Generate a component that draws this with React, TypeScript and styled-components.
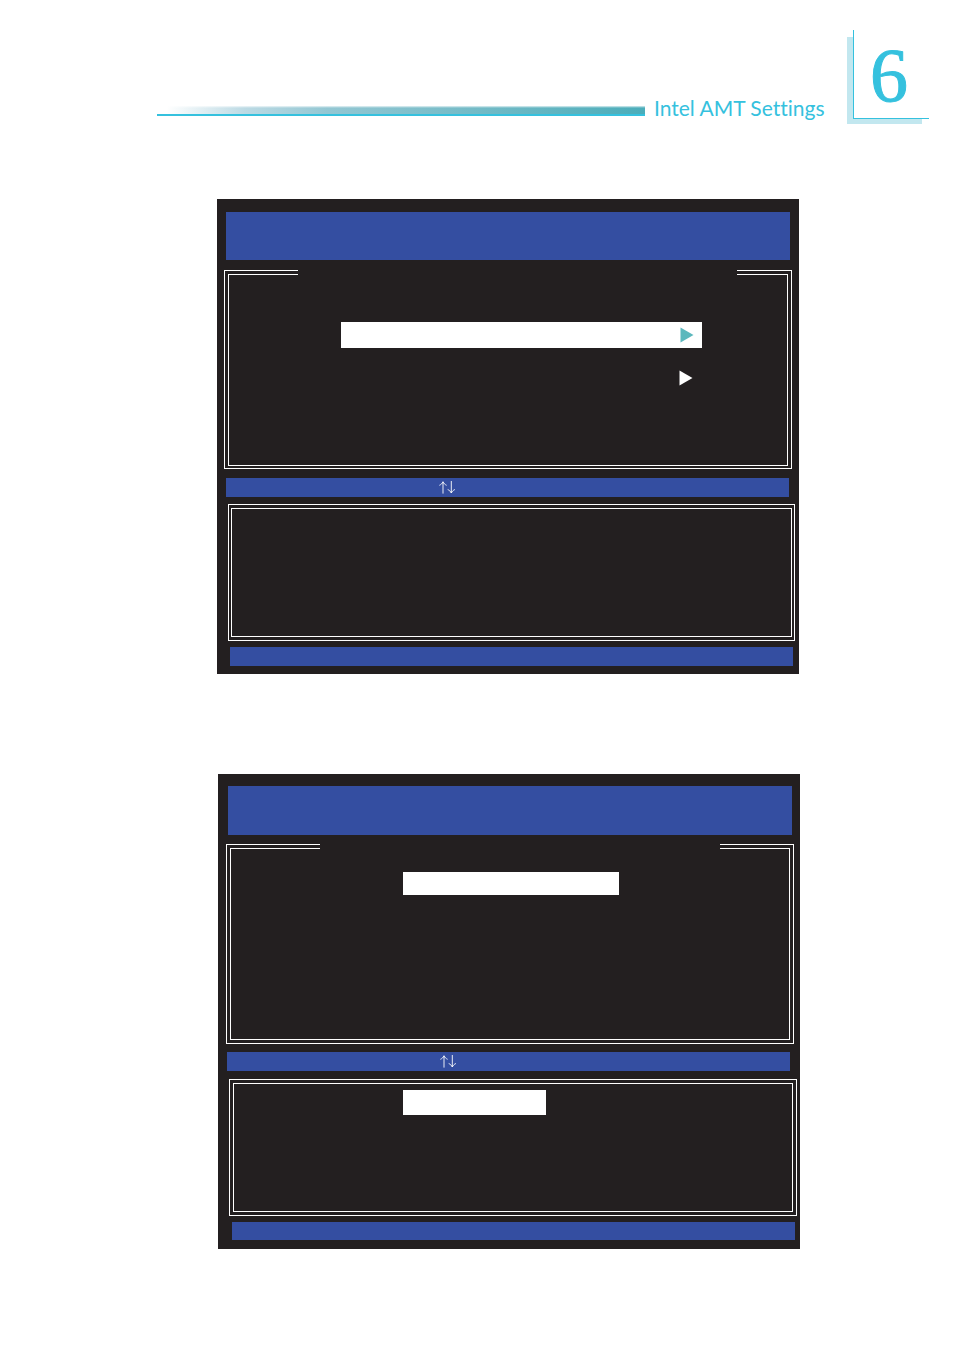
import React from "react";
import styled, { createGlobalStyle } from "styled-components";

const GlobalStyle = createGlobalStyle`
  *, *::before, *::after { box-sizing: border-box; }
  body {
    margin: 0;
    background: #ffffff;
    font-family: "Liberation Sans", Arial, sans-serif;
  }
`;

const colors = {
  accent: "#35c1de",
  pale: "#c2e7ef",
  screen: "#231f20",
  bar: "#344ea1",
  teal: "#5cb8bd",
};

const Page = styled.div`
  padding: 30px 25px 101px;
`;

const Header = styled.header`
  display: flex;
  align-items: flex-start;
  padding-left: 132px;
`;

const Rule = styled.div`
  flex: 1;
  height: 10px;
  margin-top: 76px;
  border-bottom: 2px solid ${colors.accent};
  background:
    linear-gradient(to bottom, rgba(255, 255, 255, 0.6) 0 1px, rgba(255, 255, 255, 0.2) 1px 2px, transparent 2px),
    linear-gradient(to right, #ffffff 2%, #bcdae4 18%, #93c7d3 35%, #77bcc8 62%, #4badba 100%);
`;

const Title = styled.h1`
  margin: 64px 31px 0 9px;
  width: 168px;
  white-space: nowrap;
  font: 400 21px/28px Lato, "Open Sans", sans-serif;
  font-variant-ligatures: none;
  color: ${colors.accent};
`;

const Chapter = styled.div`
  position: relative;
  z-index: 0;
  width: 76px;
  height: 89px;
  padding-right: 5px;
  border-left: 1px solid ${colors.accent};
  border-bottom: 1px solid ${colors.accent};
  background: #ffffff;
  color: ${colors.accent};
  font: 400 76px/90px "Liberation Serif", "Times New Roman", serif;
  -webkit-text-stroke: 1px ${colors.accent};
  text-align: center;

  &::before,
  &::after {
    content: "";
    position: absolute;
    background: ${colors.pale};
  }
  &::before {
    top: 7px;
    bottom: -6px;
    left: -7px;
    width: 6px;
  }
  &::after {
    left: -7px;
    right: 7px;
    bottom: -6px;
    height: 5px;
  }
`;

const Screens = styled.main`
  display: flex;
  flex-direction: column;
  gap: 100px;
  padding: 77px 129px 0 192px;
`;

const Screen = styled.section<{ $shift?: boolean }>`
  display: flex;
  flex-direction: column;
  margin-left: ${(p) => (p.$shift ? 1 : 0)}px;
  margin-right: ${(p) => (p.$shift ? 0 : 1)}px;
  padding: ${(p) => (p.$shift ? "12px 0 9px" : "13px 0 8px")};
  background: ${colors.screen};
`;

const Bar = styled.div<{ $height: number; $inset: string }>`
  height: ${(p) => p.$height}px;
  margin: ${(p) => p.$inset};
  background: ${colors.bar};
`;

const KeyBar = styled(Bar)`
  display: flex;
  align-items: center;
  padding-left: 213px;
  color: #ffffff;
`;

const Frame = styled.div<{ $height: number; $inset: string; $space?: string }>`
  position: relative;
  display: flex;
  min-height: ${(p) => p.$height}px;
  margin: ${(p) => p.$inset};
  padding: ${(p) => p.$space ?? "3px"};
  border: 1px solid #ffffff;
`;

const FrameInner = styled.div<{ $padding?: string }>`
  flex: 1;
  display: flex;
  flex-direction: column;
  align-items: stretch;
  gap: 17px;
  padding: ${(p) => p.$padding ?? "0"};
  border: 1px solid #ffffff;
`;

const HeadingGap = styled.div<{ $left: number; $right: number }>`
  position: absolute;
  top: -1px;
  left: ${(p) => p.$left}px;
  right: ${(p) => p.$right}px;
  height: 5px;
  background: ${colors.screen};
`;

const MenuItem = styled.button<{ $selected?: boolean; $height?: number }>`
  display: flex;
  align-items: center;
  justify-content: flex-end;
  height: ${(p) => p.$height ?? 26}px;
  padding: 0 ${(p) => (p.$selected ? 8 : 9)}px 0 0;
  border: 0;
  background: ${(p) => (p.$selected ? "#ffffff" : "transparent")};
  color: ${(p) => (p.$selected ? colors.teal : "#ffffff")};
`;

const Entry = styled.input`
  width: 143px;
  height: 25px;
  padding: 0 8px;
  border: 0;
  border-radius: 0;
  background: #ffffff;
  font: 16px "Liberation Sans", sans-serif;
`;

const Triangle = () => (
  <svg width="14" height="16" viewBox="0 0 14 16" aria-hidden="true">
    <path d="M0.5 0.5L13.5 8L0.5 15.5Z" fill="currentColor" />
  </svg>
);

const UpDownArrows = () => (
  <svg width="17" height="13" viewBox="0 0 17 13" role="img" aria-label="Up and down arrow keys">
    <g fill="none" stroke="currentColor" strokeWidth="0.9">
      <path d="M4 0.8V12.6M0.4 4.3C2 3.6 3.3 2.4 4 0.8C4.700 2.400 6 3.600 7.600 4.300" />
      <path d="M12.300 0V12M8.700 8.500C10.300 9.200 11.600 10.400 12.300 12C13 10.400 14.300 9.200 15.900 8.500" />
    </g>
  </svg>
);

export default function App() {
  return (
    <>
      <GlobalStyle />
      <Page>
        <Header>
          <Rule />
          <Title>Intel AMT Settings</Title>
          <Chapter>6</Chapter>
        </Header>
        <Screens>
          <Screen>
            <Bar $height={48} $inset="0 9px" />
            <Frame $height={199} $inset="10px 7px 9px" $space="3px 3px 2px">
              <HeadingGap $left={73} $right={54} />
              <FrameInner $padding="47px 85px 0 112px">
                <MenuItem type="button" $selected aria-label="First menu item">
                  <Triangle />
                </MenuItem>
                <MenuItem type="button" aria-label="Second menu item">
                  <Triangle />
                </MenuItem>
              </FrameInner>
            </Frame>
            <KeyBar $height={19} $inset="0 10px 0 9px">
              <UpDownArrows />
            </KeyBar>
            <Frame $height={137} $inset="7px 4px 6px 11px" $space="3px 2px">
              <FrameInner />
            </Frame>
            <Bar $height={19} $inset="0 6px 0 13px" />
          </Screen>
          <Screen $shift>
            <Bar $height={49} $inset="0 8px 0 10px" />
            <Frame $height={200} $inset="9px 6px 8px 8px">
              <HeadingGap $left={93} $right={73} />
              <FrameInner $padding="23px 170px 0 172px">
                <MenuItem type="button" $selected $height={23} aria-label="Selected menu item" />
              </FrameInner>
            </Frame>
            <KeyBar $height={19} $inset="0 10px 0 9px">
              <UpDownArrows />
            </KeyBar>
            <Frame $height={137} $inset="8px 3px 6px 11px">
              <FrameInner $padding="6px 0 0 169px">
                <Entry type="text" aria-label="Entry" />
              </FrameInner>
            </Frame>
            <Bar $height={18} $inset="0 5px 0 14px" />
          </Screen>
        </Screens>
      </Page>
    </>
  );
}
